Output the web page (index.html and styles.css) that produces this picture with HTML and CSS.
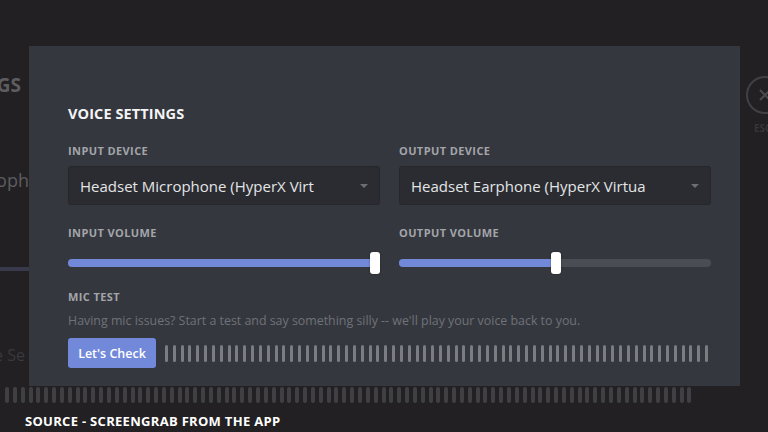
FILE: index.html
```html
<!DOCTYPE html>
<html>
<head>
<meta charset="utf-8">
<link rel="stylesheet" href="styles.css">
</head>
<body>
<div class="stage">
  <div class="bg-left">
    <div class="bg-title">VOICE SETTINGS</div>
    <div class="bg-device">Headset Microph</div>
    <div class="bg-line"></div>
    <div class="bg-misc">Voice Se</div>
  </div>
  <div class="modal">
    <h1 class="title">VOICE SETTINGS</h1>
    <div class="grid">
      <div class="field">
        <div class="label">INPUT DEVICE</div>
        <div class="select"><span>Headset Microphone (HyperX Virt</span><i class="caret"></i></div>
      </div>
      <div class="field">
        <div class="label">OUTPUT DEVICE</div>
        <div class="select"><span>Headset Earphone (HyperX Virtua</span><i class="caret"></i></div>
      </div>
      <div class="field">
        <div class="label">INPUT VOLUME</div>
        <div class="slider"><div class="track"><div class="fill" style="width:98.4%"></div></div><div class="handle" style="left:98.4%"></div></div>
      </div>
      <div class="field">
        <div class="label">OUTPUT VOLUME</div>
        <div class="slider"><div class="track"><div class="fill" style="width:50%"></div></div><div class="handle" style="left:50.3%"></div></div>
      </div>
    </div>
    <div class="label mic-label">MIC TEST</div>
    <p class="desc">Having mic issues? Start a test and say something silly -- we'll play your voice back to you.</p>
    <div class="mic-row">
      <button class="btn">Let's Check</button>
      <div class="meter">
        <i></i><i></i><i></i><i></i><i></i><i></i><i></i><i></i><i></i><i></i>
        <i></i><i></i><i></i><i></i><i></i><i></i><i></i><i></i><i></i><i></i>
        <i></i><i></i><i></i><i></i><i></i><i></i><i></i><i></i><i></i><i></i>
        <i></i><i></i><i></i><i></i><i></i><i></i><i></i><i></i><i></i><i></i>
        <i></i><i></i><i></i><i></i><i></i><i></i><i></i><i></i><i></i><i></i>
        <i></i><i></i><i></i><i></i><i></i><i></i><i></i><i></i><i></i><i></i>
        <i></i><i></i><i></i><i></i><i></i><i></i><i></i><i></i><i></i><i></i>
      </div>
    </div>
  </div>
  <div class="bg-right">
    <div class="close">
      <svg width="40" height="40" viewBox="0 0 40 40"><circle cx="20" cy="20" r="18" fill="none" stroke="#414044" stroke-width="2"/><path d="M15 15 L25 25 M25 15 L15 25" stroke="#4a494d" stroke-width="2.2" fill="none"/></svg>
    </div>
    <div class="esc">ESC</div>
  </div>
</div>
<div class="bg-bars">
  <i></i><i></i><i></i><i></i><i></i><i></i><i></i><i></i><i></i><i></i>
  <i></i><i></i><i></i><i></i><i></i><i></i><i></i><i></i><i></i><i></i>
  <i></i><i></i><i></i><i></i><i></i><i></i><i></i><i></i><i></i><i></i>
  <i></i><i></i><i></i><i></i><i></i><i></i><i></i><i></i><i></i><i></i>
  <i></i><i></i><i></i><i></i><i></i><i></i><i></i><i></i><i></i><i></i>
  <i></i><i></i><i></i><i></i><i></i><i></i><i></i><i></i><i></i><i></i>
  <i></i><i></i><i></i><i></i><i></i><i></i><i></i><i></i><i></i><i></i>
  <i></i><i></i><i></i><i></i><i></i><i></i><i></i><i></i><i></i><i></i>
  <i></i><i></i><i></i><i></i><i></i><i></i><i></i><i></i>
</div>
<div class="caption">SOURCE - SCREENGRAB FROM THE APP</div>
</body>
</html>
```
FILE: styles.css
```css
* { box-sizing: border-box; }
html, body { margin: 0; padding: 0; }
body {
  width: 768px;
  height: 432px;
  overflow: hidden;
  background: #222022;
  font-family: "Open Sans", "Noto Sans", sans-serif;
  color: #dcddde;
}
.stage {
  display: flex;
  height: 386px;
}
.bg-left {
  width: 29px;
  flex: none;
  display: flex;
  flex-direction: column;
  align-items: flex-end;
  overflow: hidden;
  padding-right: 8px;
  padding-top: 74px;
}
.bg-title {
  white-space: nowrap;
  font-size: 19px;
  font-weight: 700;
  color: #5d5c60;
  line-height: 22px;
}
.bg-device {
  white-space: nowrap;
  font-size: 18px;
  color: #5d5c60;
  line-height: 22px;
  margin-top: 73px;
  margin-right: -8px;
}
.bg-line {
  align-self: stretch;
  margin-right: -8px;
  height: 4px;
  background: #38394a;
  margin-top: 76px;
}
.bg-misc {
  white-space: nowrap;
  font-size: 16px;
  color: #3a393d;
  line-height: 20px;
  margin-top: 74px;
  margin-right: -4px;
}
.modal {
  width: 711px;
  flex: none;
  margin-top: 46px;
  height: 340px;
  background: #35373e;
  padding: 59px 29px 0 39px;
}
.title {
  margin: 0;
  font-size: 14.5px;
  font-weight: 700;
  line-height: 18px;
  color: #f4f4f5;
  letter-spacing: 0.1px;
}
.grid {
  display: grid;
  grid-template-columns: 312px 312px;
  column-gap: 19px;
  row-gap: 20px;
  margin-top: 20px;
}
.label {
  font-size: 11px;
  font-weight: 700;
  line-height: 16px;
  color: #a3a5aa;
  letter-spacing: 0.4px;
}
.select {
  margin-top: 7px;
  height: 39px;
  background: #2a2c31;
  border: 1px solid #25272b;
  border-radius: 3px;
  display: flex;
  align-items: center;
  justify-content: space-between;
  padding: 0 11px 0 11px;
  font-size: 15px;
  color: #e4e5e7;
}
.caret {
  width: 0;
  height: 0;
  border-left: 4px solid transparent;
  border-right: 4px solid transparent;
  border-top: 4px solid #6b6e74;
}
.slider {
  position: relative;
  margin-top: 10px;
  height: 24px;
  display: flex;
  align-items: center;
}
.track {
  width: 100%;
  height: 8px;
  border-radius: 4px;
  background: #4a4d54;
  overflow: hidden;
}
.fill {
  height: 100%;
  background: #7289da;
}
.handle {
  position: absolute;
  top: 1px;
  width: 10px;
  height: 22px;
  margin-left: -5px;
  background: #ffffff;
  border-radius: 3px;
  box-shadow: 0 0 2px rgba(0,0,0,0.4);
}
.mic-label {
  margin-top: 14px;
}
.desc {
  margin: 8px 0 0;
  font-size: 12.4px;
  line-height: 16px;
  color: #6f7278;
}
.mic-row {
  margin-top: 9px;
  display: flex;
  align-items: center;
}
.btn {
  width: 88px;
  height: 30px;
  border: none;
  border-radius: 3px;
  background: #7289da;
  color: #ffffff;
  font-family: inherit;
  font-size: 12.5px;
  font-weight: 600;
  padding: 0;
}
.meter {
  margin-left: 9px;
  width: 544px;
  height: 17px;
  display: flex;
  justify-content: space-between;
}
.meter i {
  width: 3px;
  height: 17px;
  border-radius: 2px;
  background: #7b7d83;
}
.bg-right {
  flex: 1;
  overflow: hidden;
  padding-top: 75px;
  padding-left: 4px;
}
.close {
  width: 40px;
  height: 40px;
  margin-left: 1px;
}
.esc {
  font-size: 10px;
  font-weight: 700;
  color: #373639;
  margin-left: 10px;
  margin-top: 6px;
}
.bg-bars {
  height: 20px;
  padding: 1px 0 0 5px;
  width: 692px;
  display: flex;
  justify-content: space-between;
  align-items: flex-start;
}
.bg-bars i {
  width: 4px;
  height: 16px;
  border-radius: 2px;
  background: #403f44;
}
.caption {
  padding-left: 25px;
  margin-top: 7px;
  font-size: 13px;
  font-weight: 700;
  line-height: 16px;
  color: #ffffff;
  letter-spacing: 0.3px;
}
```
